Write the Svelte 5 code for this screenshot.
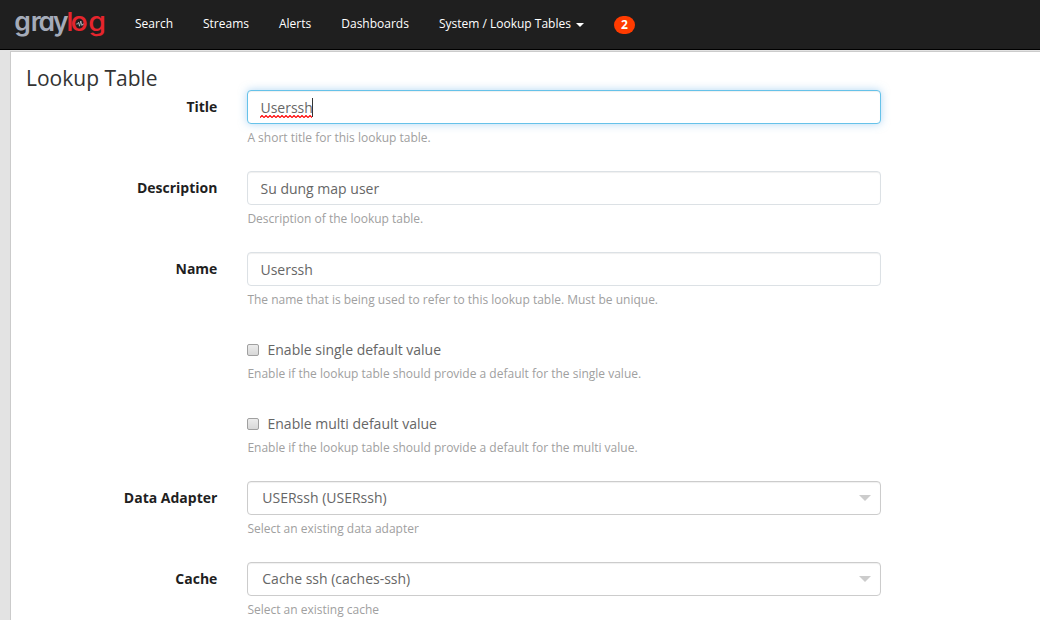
<script>
  const links = ['Search', 'Streams', 'Alerts', 'Dashboards'];
  const rows = [
    { kind: 'input', label: 'Title', value: 'Userssh', help: 'A short title for this lookup table.', focused: true },
    { kind: 'input', label: 'Description', value: 'Su dung map user', help: 'Description of the lookup table.' },
    { kind: 'input', label: 'Name', value: 'Userssh', help: 'The name that is being used to refer to this lookup table. Must be unique.' },
    { kind: 'check', label: '', value: 'Enable single default value', help: 'Enable if the lookup table should provide a default for the single value.' },
    { kind: 'check', label: '', value: 'Enable multi default value', help: 'Enable if the lookup table should provide a default for the multi value.' },
    { kind: 'select', label: 'Data Adapter', value: 'USERssh (USERssh)', help: 'Select an existing data adapter' },
    { kind: 'select', label: 'Cache', value: 'Cache ssh (caches-ssh)', help: 'Select an existing cache' }
  ];
</script>

<div class="page">
  <nav>
    <svg class="logo" width="92" height="32" viewBox="0 0 92 32" aria-label="graylog">
      <text y="22.8" transform="scale(1.02 1)" class="gray" x="-.8 15.4 23.1 37.2">gray</text>
      <text y="22.8" transform="scale(1.1 1)" class="log" x="46.6 50.4 66.5">log</text>
      <path d="M61.2 16h1.4l.9-1.8 1 4 1.3-5.2 1.1 4.5.9-1.5h1" fill="none" stroke="#bfc4cd" stroke-width=".8" />
    </svg>
    {#each links as link}<a href="#top">{link}</a>{/each}
    <a href="#top" class="current">System / Lookup Tables <i class="caret"></i></a>
    <span class="badge">2</span>
  </nav>
  <div class="body">
    <main>
      <h2>Lookup Table</h2>
      {#each rows as row}
        <div class="row {row.kind}">
          <div class="label">{row.label}</div>
          <div class="field">
            {#if row.kind === 'check'}
              <div class="option"><span class="box"></span>{row.value}</div>
            {:else if row.kind === 'select'}
              <div class="control"><span>{row.value}</span><i class="arrow"></i></div>
            {:else}
              <div class="control" class:focused={row.focused}>
                <span class="value">{row.value}{#if row.focused}<svg class="squiggle" width="52" height="3" aria-hidden="true"><defs><pattern id="wave" width="4" height="3" patternUnits="userSpaceOnUse"><path d="M-1 1.5L0 2.5L2 .5L4 2.5L5 1.5" fill="none" stroke="#f00" stroke-width="1.15" /></pattern></defs><rect width="52" height="3" fill="url(#wave)" /></svg>{/if}</span>{#if row.focused}<i class="cursor"></i>{/if}
              </div>
            {/if}
            <p>{row.help}</p>
          </div>
        </div>
      {/each}
    </main>
  </div>
</div>

<style>
  :global(body) { overflow: hidden; }
  .page { height: 620px; overflow: hidden; display: flex; flex-direction: column; font: 14px/20px "Open Sans", sans-serif; color: #666; background: #e3e3e3; white-space: nowrap; }
  * { box-sizing: border-box; }
  nav { height: 50px; flex: none; background: #1f1f1f; border-bottom: 1px solid #000; display: flex; align-items: flex-start; padding-left: 15px; }
  .logo { margin: 8px 13px 0 0; overflow: visible; }
  .logo text { font: 600 26px/1 Inter, sans-serif; font-feature-settings: "cv11"; }
  .gray { fill: #a4abb9; }
  .logo .log { fill: #e5252d; font-weight: 500; }
  nav a { font-size: 12px; color: #fff; text-decoration: none; padding: 14px 15px 0; }
  .caret { display: inline-block; border: 4px solid transparent; border-top-color: #fff; border-bottom: 0; vertical-align: middle; margin-left: 2px; }
  .badge { margin: 16px 0 0 15px; width: 21px; height: 18px; border-radius: 9px; background: #ff3b00; color: #fff; font-weight: 700; font-size: 12px; line-height: 18px; text-align: center; }
  .body { flex: 1; padding: 1px 0 0 10px; }
  main { height: 620px; background: #fff; border: 1px solid #cbcbcb; border-right: 0; padding: 13px 0 0 15px; }
  h2 { margin: 0; height: 25px; line-height: 26px; font-size: 21px; font-weight: 400; color: #333; }
  .row { display: flex; height: 81px; }
  .row.check { height: 74px; }
  .label { width: 191.4px; margin-right: 29.6px; text-align: right; font-weight: 700; color: #1f1f1f; padding-top: 7px; }
  .field { width: 634px; }
  .control { height: 34px; border: 1px solid #dce1e5; border-radius: 4px; padding: 1px 12px 0 12.5px; display: flex; align-items: center; background: #fff; box-shadow: inset 0 1px 1px #00000010; }
  .focused { border-color: #66c2e9; box-shadow: inset 0 1px 1px #00000010, 0 0 8px #66afe980; }
  .value { position: relative; }
  .squiggle { position: absolute; left: 0; bottom: 0; }
  .cursor { width: 1px; height: 19px; background: #333; margin-left: -.6px; }
  .select .control { border-color: #ccc; padding: 0 9px 0 14.3px; justify-content: space-between; }
  .arrow { border: 6px solid transparent; border-top-color: #ccc; border-bottom: 0; }
  .option { padding-top: 7px; height: 27px; display: flex; align-items: center; }
  .box { width: 12px; height: 12px; border: 1px solid #a0a0a0; border-radius: 2px; background: linear-gradient(#ececec, #d8d8d8); margin-right: 8.5px; }
  p { margin: 5px 0 0 .4px; font-size: 12px; line-height: 17px; color: #a0a0a0; }
</style>
